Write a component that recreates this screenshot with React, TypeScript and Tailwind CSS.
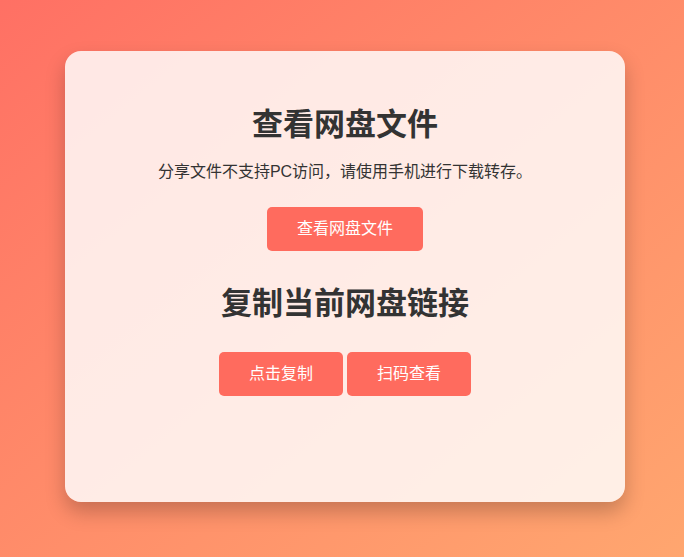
export default function App() {
  return (
    <div
      className="min-h-[557px] w-full bg-gradient-to-br from-[#ff7064] to-[#ffa66f] pl-[65px] pt-[51px]"
      style={{ fontFamily: '"Liberation Sans", "Noto Sans CJK SC", sans-serif' }}
    >
      <div className="flex h-[451px] w-[560px] flex-col items-center rounded-2xl bg-white/[0.83] pt-[54px] text-center shadow-[0_10px_20px_rgba(0,0,0,0.22)]">
        <h1 className="text-[31px] font-bold leading-[40px] text-[#333]">查看网盘文件</h1>
        <p className="mt-[15px] text-[16px] leading-[24px] text-[#333]">
          分享文件不支持PC访问，请使用手机进行下载转存。
        </p>
        <button className="mt-[23px] h-[44px] rounded-[5px] bg-[#ff6b5e] px-[30px] text-[16px] text-white">
          查看网盘文件
        </button>
        <h2 className="mt-[33px] text-[31px] font-bold leading-[40px] text-[#333]">复制当前网盘链接</h2>
        <div className="mt-[28px] flex gap-[4px]">
          <button className="h-[44px] w-[124px] rounded-[5px] bg-[#ff6b5e] text-[16px] text-white">
            点击复制
          </button>
          <button className="h-[44px] w-[124px] rounded-[5px] bg-[#ff6b5e] text-[16px] text-white">
            扫码查看
          </button>
        </div>
      </div>
    </div>
  );
}
